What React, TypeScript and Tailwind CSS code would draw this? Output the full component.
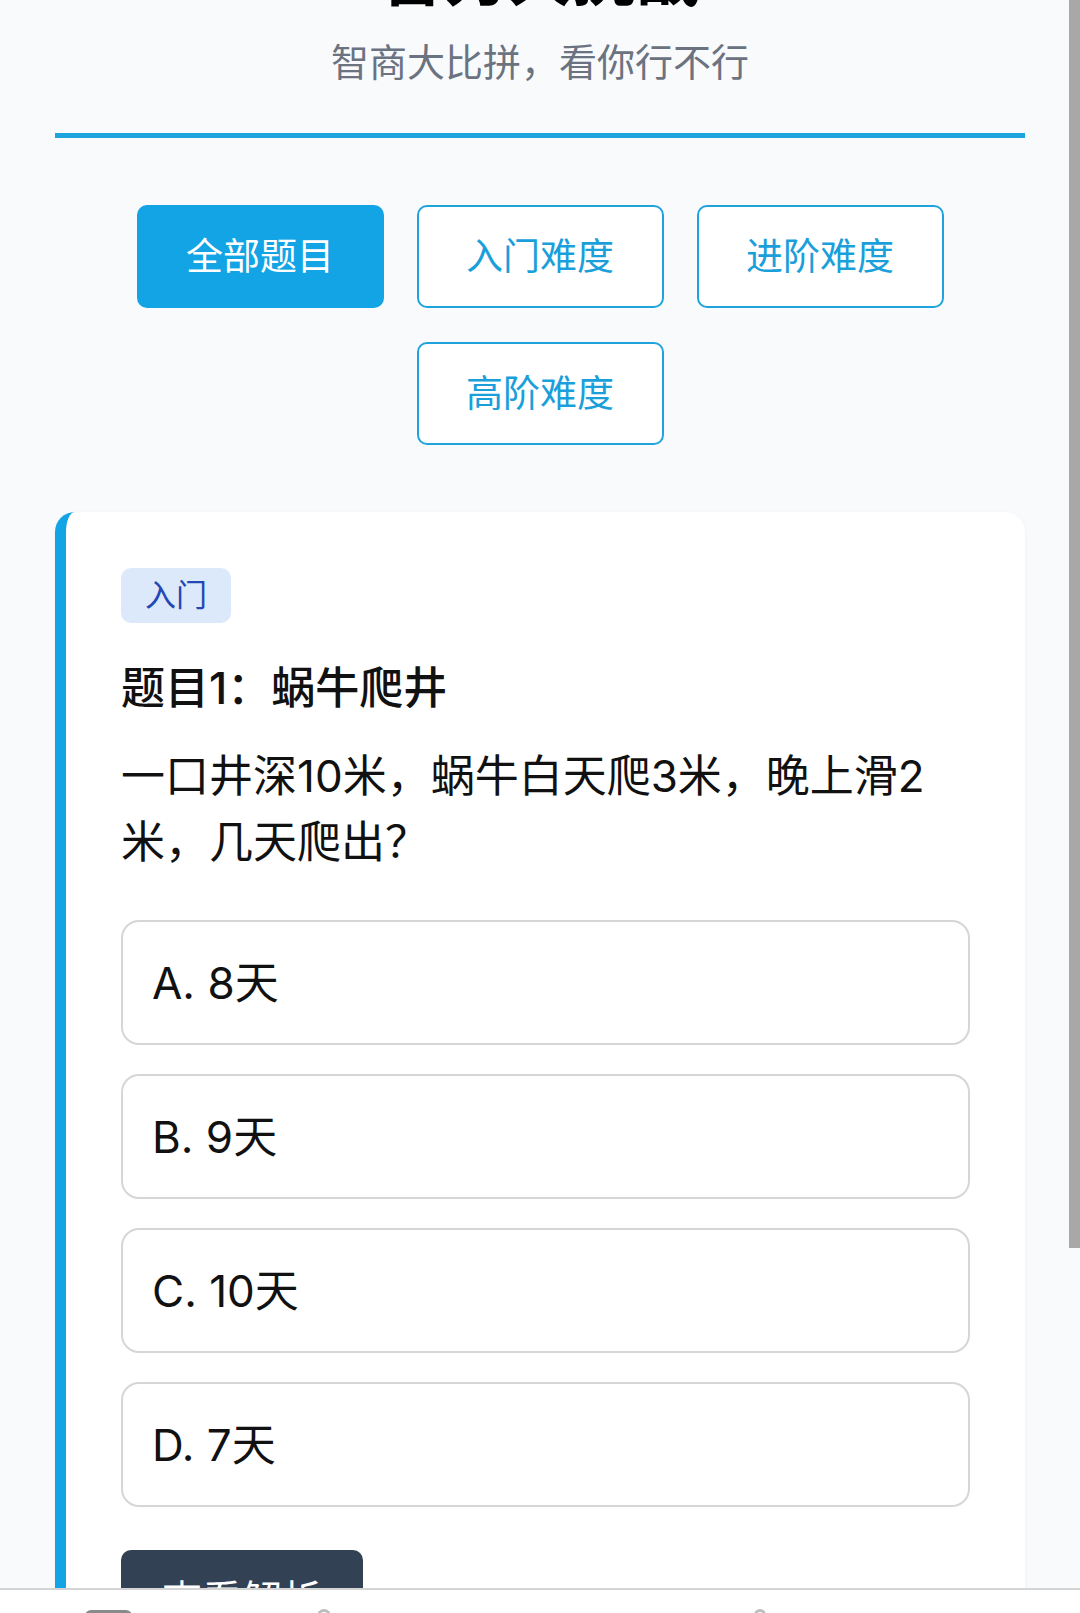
import { useState } from 'react';

// 难度筛选
const levels = ['全部题目', '入门难度', '进阶难度', '高阶难度'];

const options = ['A. 8天', 'B. 9天', 'C. 10天', 'D. 7天'];

export default function App() {
  const [active, setActive] = useState(0);
  const [picked, setPicked] = useState<number | null>(null);

  return (
    <div className="relative h-[1613px] overflow-hidden bg-[#f8fafc] font-['Inter','Noto_Sans_CJK_SC',sans-serif]">
      <div className="mx-auto w-[970px]">
        {/* 页头 */}
        <header className="border-b-[5px] border-[#1fa5de] pb-[42px] text-center">
          <h1 className="-mt-[55px] text-[64px] font-bold leading-none text-black">智力大挑战</h1>
          <p className="mt-[25px] text-[38px] leading-[57px] text-[#6b7280]">智商大比拼，看你行不行</p>
        </header>

        {/* 难度按钮 */}
        <div className="mt-[67px] flex flex-wrap justify-center gap-x-[33px] gap-y-[34px]">
          {levels.map((lv, i) => (
            <button
              key={lv}
              onClick={() => setActive(i)}
              className={
                i === active
                  ? 'flex h-[103px] w-[247px] items-center justify-center rounded-[10px] border-2 border-[#13a4e6] bg-[#13a4e6] text-[37px] text-white'
                  : 'flex h-[103px] w-[247px] items-center justify-center rounded-[10px] border-2 border-[#1fa3dd] bg-white text-[37px] text-[#1a9fdb]'
              }
            >
              {lv}
            </button>
          ))}
        </div>

        {/* 题目卡片 */}
        <section className="mt-[67px] rounded-[20px] border-l-[11px] border-[#13a4e6] bg-white pl-[55px] pr-[55px] pt-[56px] shadow-[0_1px_4px_rgba(0,0,0,0.04)]">
          <span className="flex h-[55px] w-[110px] items-center justify-center rounded-[10px] bg-[#dbe9fb] text-[31px] text-[#2347b5]">
            入门
          </span>
          <h2 className="mt-[34px] text-[44px] font-medium leading-[63px] text-[#111]">题目1：蜗牛爬井</h2>
          <p className="mt-[23px] text-[44px] leading-[66px] text-[#111]">
            一口井深10米，蜗牛白天爬3米，晚上滑2米，几天爬出？
          </p>

          <div className="mt-[45px] flex flex-col gap-[29px]">
            {options.map((op, i) => (
              <button
                key={op}
                onClick={() => setPicked(i)}
                className={
                  picked === i
                    ? 'flex h-[125px] items-center rounded-[18px] border-2 border-[#13a4e6] bg-[#f0f9ff] pl-[29px] text-left text-[44px] text-[#111]'
                    : 'flex h-[125px] items-center rounded-[18px] border-2 border-[#d6d6d6] bg-white pl-[29px] text-left text-[44px] text-[#111]'
                }
              >
                {op}
              </button>
            ))}
          </div>

          <button className="mt-[43px] h-[100px] rounded-[10px] bg-[#334155] px-[41px] text-[40px] text-white">
            查看解析
          </button>
          <div className="h-[60px]" />
        </section>
      </div>

      {/* 滚动条 */}
      <div className="absolute right-0 top-0 h-[1248px] w-[11px] bg-[#a8a8a8]" />

      {/* 浏览器底栏 */}
      <div className="absolute bottom-0 left-0 right-0 h-[25px] border-t-2 border-[#d4d4d4] bg-white">
        <div className="absolute left-[85px] top-[20px] h-[30px] w-[47px] rounded-[6px] border-[3px] border-[#8a8a8a]" />
        <div className="absolute left-[317px] top-[19px] h-[14px] w-[14px] rounded-full border-[3px] border-[#bdbdbd]" />
        <div className="absolute left-[754px] top-[19px] h-[14px] w-[12px] rounded-full border-[3px] border-[#bdbdbd]" />
      </div>
    </div>
  );
}
